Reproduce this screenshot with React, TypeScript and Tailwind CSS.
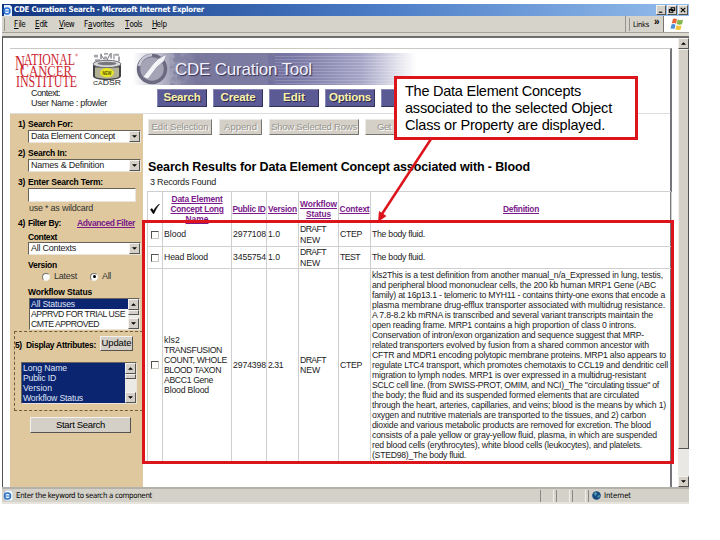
import React, { useLayoutEffect, useRef, useState } from 'react';

type TProps = { w: number; className?: string; children: string };

// Single-line label whose tracking is adjusted so that it spans exactly w pixels.
function T({ w, className = '', children }: TProps) {
  const ref = useRef<HTMLSpanElement>(null);
  const [ls, setLs] = useState(0);
  useLayoutEffect(() => {
    if (ref.current) {
      const natural = ref.current.getBoundingClientRect().width - ls * children.length;
      setLs((w - natural) / children.length);
    }
  }, [w, children]);
  return (
    <span ref={ref} className={`inline-block shrink-0 whitespace-pre ${className}`} style={{ letterSpacing: ls }}>
      {children}
    </span>
  );
}

const raised = 'border border-t-[#f4f2ee] border-l-[#f4f2ee] border-b-[#55534f] border-r-[#55534f] bg-[#d4d0c8]';
const sunken = 'border border-t-[#66625a] border-l-[#66625a] border-b-[#e9e5dc] border-r-[#e9e5dc] bg-white';

function Arrow({ up = false }: { up?: boolean }) {
  return (
    <svg className="block h-[3px] w-[5px]" viewBox="0 0 6 3">
      <path d={up ? 'M0 3L3 0L6 3Z' : 'M0 0H6L3 3Z'} fill="#000" />
    </svg>
  );
}

function ScrollButton({ up = false, className = '' }: { up?: boolean; className?: string }) {
  return (
    <div className={`flex h-[11px] w-[11px] shrink-0 items-center justify-center ${raised} ${className}`}>
      <Arrow up={up} />
    </div>
  );
}

function Select({ label, w }: { label: string; w: number }) {
  return (
    <div className={`ml-[18px] flex h-[13px] w-[113px] items-center justify-between pl-[2px] ${sunken}`}>
      <T w={w} className="text-[9px] text-[#222]">{label}</T>
      <ScrollButton />
    </div>
  );
}

function Label({ n, text, w, className }: { n?: string; text: string; w: number; className: string }) {
  return (
    <div className={`flex items-center pl-[8px] text-[8.5px] font-bold ${className}`}>
      <span className="w-[10px] shrink-0 tracking-[-0.3px]">{n}</span>
      <T w={w}>{text}</T>
    </div>
  );
}

function ListBox({ rows, className, selected }: { rows: [string, number][]; className: string; selected: number }) {
  return (
    <div className={`flex ${className} ${sunken}`}>
      <div className="flex-1">
        {rows.map(([t, w], i) => (
          <div key={t} className={`flex h-[10px] items-center pt-px pl-[1px] text-[8.7px] leading-[9px] ${i < selected ? 'bg-[#0c2570] text-[#dfe4f4]' : 'text-[#222]'}`}>
            <T w={w}>{t}</T>
          </div>
        ))}
      </div>
      <div className="flex w-[11px] shrink-0 flex-col justify-between bg-[#eceae5]">
        <div>
          <ScrollButton up />
          <div className={`h-[5px] w-[11px] ${raised}`} />
        </div>
        <ScrollButton />
      </div>
    </div>
  );
}

function NciLogo() {
  return (
    <svg className="ml-[2px] h-[36px] w-[68px] shrink-0" viewBox="0 0 68 36" fontFamily="'Liberation Serif', serif" fill="#cc2630">
      <text x="3" y="18" fontSize="20" textLength="10" lengthAdjust="spacingAndGlyphs">N</text>
      <text x="12" y="13" fontSize="16" textLength="51" lengthAdjust="spacingAndGlyphs">ATIONAL</text>
      <text x="8" y="25" fontSize="18" textLength="9" lengthAdjust="spacingAndGlyphs">C</text>
      <text x="17" y="23.500" fontSize="15" textLength="43" lengthAdjust="spacingAndGlyphs">ANCER</text>
      <text x="4" y="35" fontSize="16" textLength="61" lengthAdjust="spacingAndGlyphs">INSTITUTE</text>
      <circle cx="64.500" cy="3" r="0.900" fill="none" stroke="#c8202c" strokeWidth="0.500" />
    </svg>
  );
}

function CadsrLogo() {
  return (
    <svg className="ml-[10px] h-[34px] w-[34px] shrink-0" viewBox="0 0 34 37" preserveAspectRatio="none">
      <g fill="#a7a5ac">
        <path d="M4 3h4v3h-4zM10 2h2v6h-2zM14 1h4v2h-4zM14 5h3v3h-3zM20 1h2v6h-2zM25 2h4v2h-4zM28 5h2v5h-2zM5 8h5v2h-5z" />
      </g>
      <path d="M11 3l3 5M20 2l-3 7M24 2v6" stroke="#747078" strokeWidth="1" />
      <path d="M3 14v12c0 6 28 6 28 0V14z" fill="#3f3f44" />
      <path d="M5 17v9c0 4 24 4 24 0v-9z" fill="#b3b194" />
      <ellipse cx="17" cy="13" rx="14" ry="4" fill="#d9d9dc" stroke="#68686f" />
      <ellipse cx="17" cy="12.500" rx="9.500" ry="2" fill="#77777e" />
      <ellipse cx="17" cy="22.500" rx="7" ry="5" fill="#e7e526" />
      <text x="12.500" y="24.500" fontSize="5" fontWeight="bold" fontFamily="Liberation Sans, sans-serif" textLength="9" lengthAdjust="spacingAndGlyphs" fill="#575500">NEW</text>
      <text x="3" y="36" fontSize="7.500" fontFamily="Liberation Sans, sans-serif" textLength="28" lengthAdjust="spacingAndGlyphs" fill="#222"><tspan fontSize="6">CA</tspan>DSR</text>
    </svg>
  );
}

function Banner() {
  return (
    <svg className="ml-[9px] h-[34px] w-[300px] shrink-0" viewBox="133 52 300 34">
      <defs>
        <linearGradient id="fade" x1="0" x2="1">
          <stop offset="0" stopColor="#fff" />
          <stop offset="0.12" stopColor="#a9a8bd" />
          <stop offset="0.22" stopColor="#77759b" />
          <stop offset="0.55" stopColor="#8280ab" />
          <stop offset="0.78" stopColor="#aaa9c9" />
          <stop offset="0.97" stopColor="#fff" />
        </linearGradient>
        <linearGradient id="down" x1="0" x2="1">
          <stop offset="0" stopColor="#55538a" stopOpacity="0.3" />
          <stop offset="1" stopColor="#8885b5" stopOpacity="0" />
        </linearGradient>
        <filter id="speckle" x="0" y="0" width="100%" height="100%">
          <feTurbulence type="fractalNoise" baseFrequency="0.16" numOctaves="3" seed="4" />
          <feColorMatrix values="0 0 0 0 0.2  0 0 0 0 0.2  0 0 0 0 0.34  4 0 0 0 -1.5" />
        </filter>
      </defs>
      <rect x="133" y="53" width="292" height="32" fill="url(#fade)" />
      <rect x="268" y="53" width="130" height="32" fill="url(#down)" />
      <rect x="170" y="53" width="105" height="32" filter="url(#speckle)" opacity="0.75" />
      {[56, 59, 62, 65, 68, 71, 74, 77, 80, 83].map((y) => (
        <path key={y} d={`M275 ${y}.5H420`} stroke="#fff" strokeWidth="0.8" opacity="0.22" />
      ))}
      <circle cx="152" cy="69" r="13.500" fill="#a5a4b6" stroke="#6b6a80" strokeWidth="3.500" />
      <path d="M139 66a14 14 0 0 1 13-11" stroke="#c9c9d6" strokeWidth="2.500" fill="none" />
      <path d="M143 77l10-13 5-5 9-5-3 7-7 6-9 12z" fill="#f4f4f8" stroke="#8c8aa0" strokeWidth="0.600" />
      <text x="175" y="74.500" textLength="137" fontFamily="Liberation Sans, sans-serif" fontSize="17" fill="#f3f2fc" className="[text-shadow:1px_1px_1px_#2f2d55]">CDE Curation Tool</text>
    </svg>
  );
}

function NavButton({ label, w }: { label: string; w: number }) {
  return (
    <div className="flex h-[18px] w-[50px] shrink-0 items-center justify-center border border-t-[#8886b5] border-l-[#8886b5] border-r-[#33325c] border-b-[#33325c] bg-[#5c5a94] text-[11.5px] font-bold text-[#fbf3a8] [text-shadow:1px_1px_0_#292850]">
      <T w={w}>{label}</T>
    </div>
  );
}

function GreyButton({ label, w, className }: { label: string; w: number; className: string }) {
  return (
    <div className={`flex h-[16px] shrink-0 items-center border border-t-[#ebe9e4] border-l-[#ebe9e4] border-r-[#77756f] border-b-[#77756f] bg-[#d4d0c8] text-[9.5px] text-[#96938c] [text-shadow:1px_1px_0_#fff] ${className}`}>
      <T w={w}>{label}</T>
    </div>
  );
}

const definition: [string, number][] = [
  ['kls2This is a test definition from another manual_n/a_Expressed in lung, testis,', 291],
  ['and peripheral blood mononuclear cells, the 200 kb human MRP1 Gene (ABC', 284],
  ['family) at 16p13.1 - telomeric to MYH11 - contains thirty-one exons that encode a', 293],
  ['plasma membrane drug-efflux transporter associated with multidrug resistance.', 293],
  ['A 7.8-8.2 kb mRNA is transcribed and several variant transcripts maintain the', 281],
  ['open reading frame. MRP1 contains a high proportion of class 0 introns.', 264],
  ['Conservation of intron/exon organization and sequence suggest that MRP-', 272],
  ['related transporters evolved by fusion from a shared common ancestor with', 277],
  ['CFTR and MDR1 encoding polytopic membrane proteins. MRP1 also appears to', 294],
  ['regulate LTC4 transport, which promotes chemotaxis to CCL19 and dendritic cell', 296],
  ['migration to lymph nodes. MRP1 is over expressed in a multidrug-resistant', 274],
  ['SCLC cell line. (from SWISS-PROT, OMIM, and NCI)_The "circulating tissue" of', 287],
  ['the body; the fluid and its suspended formed elements that are circulated', 267],
  ['through the heart, arteries, capillaries, and veins; blood is the means by which 1)', 294],
  ['oxygen and nutritive materials are transported to the tissues, and 2) carbon', 274],
  ['dioxide and various metabolic products are removed for excretion. The blood', 279],
  ['consists of a pale yellow or gray-yellow fluid, plasma, in which are suspended', 285],
  ['red blood cells (erythrocytes), white blood cells (leukocytes), and platelets.', 270],
  ['(STED98)_The body fluid.', 94],
];

type Line = [string, number];
type Row = { cells: Line[][]; height: string };

const rows: Row[] = [
  { height: 'h-[24px]', cells: [[['Blood', 22]], [['2977108', 33]], [['1.0', 12]], [['DRAFT', 26], ['NEW', 20]], [['CTEP', 22]], [['The body fluid.', 53]]] },
  { height: 'h-[22px]', cells: [[['Head Blood', 44]], [['3455754', 33]], [['1.0', 12]], [['DRAFT', 26], ['NEW', 20]], [['TEST', 20]], [['The body fluid.', 53]]] },
  {
    height: 'h-[193px]',
    cells: [
      [['kls2', 16], ['TRANSFUSION', 58], ['COUNT, WHOLE', 63], ['BLOOD TAXON', 57], ['ABCC1 Gene', 49], ['Blood Blood', 45]],
      [['2974398', 33]], [['2.31', 15]], [['DRAFT', 26], ['NEW', 20]], [['CTEP', 22]], definition,
    ],
  },
];

const headers: Line[][] = [
  [['Data Element', 51], ['Concept Long', 53], ['Name', 23]],
  [['Public ID', 33]], [['Version', 29]], [['Workflow', 37], ['Status', 25]], [['Context', 30]], [['Definition', 36]],
];

const gridCols = 'grid grid-cols-[15px_69px_35px_32px_40px_32px_301px]';

function Results() {
  return (
    <div className="ml-[4px] w-[524px] border-t border-l border-[#cfcfd2] text-[8.7px] leading-[10.05px] text-[#222]">
      <div className={`${gridCols} h-[31px]`}>
        <div className="flex items-center justify-center border-r border-[#cfcfd2] pt-[2px]">
          <svg className="h-[10px] w-[10px]" viewBox="0 0 10 10"><path d="M.5 5.500L2 4.500 3.500 7C5 4 7 1.500 9.500 0 7 3 5.500 6 4 9.500H3z" fill="#000" stroke="#000" strokeWidth=".5" /></svg>
        </div>
        {headers.map((h, i) => (
          <div key={i} className="flex flex-col items-center justify-center border-r border-[#cfcfd2] pt-[2px] text-[8.4px] font-bold leading-[10px] text-[#7b1a8b]">
            {h.map(([t, w]) => <T key={t} w={w} className="underline">{t}</T>)}
          </div>
        ))}
      </div>
      {rows.map((r, i) => (
        <div key={i} className={`${gridCols} ${r.height} border-b border-[#cfcfd2]`}>
          <div className="flex items-center justify-center border-r border-[#cfcfd2]">
            <div className="h-[8px] w-[8px] border border-t-[#55534f] border-l-[#55534f] border-r-[#c9c6bf] border-b-[#c9c6bf] bg-white" />
          </div>
          {r.cells.map((c, j) => (
            <div key={j} className="flex flex-col items-start justify-center border-r border-[#cfcfd2] pl-px">
              {c.map(([t, w], k) => <T key={k} w={w}>{t}</T>)}
            </div>
          ))}
        </div>
      ))}
    </div>
  );
}

const menu: [string, string, number, string][] = [
  ['', 'F', 11, 'ile'], ['', 'E', 12, 'dit'], ['', 'V', 15, 'iew'], ['F', 'a', 30, 'vorites'], ['', 'T', 17, 'ools'], ['', 'H', 15, 'elp'],
];

export default function App() {
  return (
    <div className="relative h-[540px] w-[720px] overflow-hidden bg-white pt-[4px] pl-[2px] font-['Liberation_Sans',sans-serif] text-black">
      <div className="flex h-[500px] w-[687px] flex-col">
        {/* title bar */}
        <div className="flex h-[12px] shrink-0 items-center bg-linear-to-r from-[#123580] via-[#4c7cc6] via-55% to-[#94bdec] pr-px">
          <svg className="mr-[2px] ml-px h-[11px] w-[9px]" viewBox="0 0 9 11"><path d="M1 0h6l2 2v9H1z" fill="#e7eefc" /><circle cx="4" cy="6" r="3" fill="none" stroke="#2a73d8" strokeWidth="1.500" /><path d="M1 6h6" stroke="#2a73d8" /></svg>
          <T w={190} className="font-['DejaVu_Sans_Condensed','DejaVu_Sans'] text-[7.8px] font-bold text-white">CDE Curation: Search - Microsoft Internet Explorer</T>
          <div className="ml-auto flex gap-[1px]">
            {['M2 7h4', 'M3.500 2h4v3h-4zM1.500 4h4v3h-4z', 'M2 2l5 5M7 2l-5 5'].map((d, i) => (
              <div key={i} className={`h-[10px] w-[10px] ${raised}`}>
                <svg viewBox="0 0 9 9" className="h-full w-full"><path d={d} fill="none" stroke="#000" strokeWidth="1.200" /></svg>
              </div>
            ))}
          </div>
        </div>
        {/* menu bar */}
        <div className="flex h-[17px] shrink-0 items-center border-b border-[#a5a29b] bg-[#d6d3ca]">
          <div className="h-[13px] w-[3px] border-r border-[#96938c]" />
          <div className="ml-[9px] flex pt-[2px] text-[8px] font-['DejaVu_Sans_Condensed','DejaVu_Sans']">
            {menu.map(([a, u, w, rest], i) => (
              <div key={i} className={`flex ${['w-[21px]', 'w-[24px]', 'w-[25px]', 'w-[41px]', 'w-[27px]', 'w-[20px]'][i]}`}>
                {a && <T w={4}>{a}</T>}
                <T w={4.5} className="underline">{u}</T>
                <T w={a ? w - 8.5 : w - 4.5}>{rest}</T>
              </div>
            ))}
          </div>
          <div className="ml-auto flex h-full items-center border-l border-[#96938c] pl-[3px]">
            <div className="mr-[3px] h-[13px] w-px bg-[#96938c]" />
            <T w={16} className="pt-[2px] font-['DejaVu_Sans_Condensed','DejaVu_Sans'] text-[7.5px]">Links</T>
            <span className="ml-[5px] w-[9px] pb-[5px] text-[10px] leading-[10px] font-bold">»</span>
            <div className="flex h-full w-[26px] items-center justify-center border-l border-[#77756f] bg-white">
              <svg className="h-[13px] w-[14px]" viewBox="0 0 14 13"><path d="M3 1q2-1 4 .3L6 5.700Q4 4.500 1.700 5.500z" fill="#ec6434" /><path d="M7.700 1.600q2 1 5.300.2L12 6.300q-3 .8-5.300-.2z" fill="#7fb848" /><path d="M1.500 6.500q2-1 4 .3L4.500 11Q2.500 10 .5 10.700z" fill="#4a8fd8" /><path d="M6.500 7.200q2 1 5 .2l-1 4.300q-3 .7-5-.4z" fill="#f2c238" /></svg>
            </div>
          </div>
        </div>
        <div className="h-[3px] shrink-0 bg-[#dcd9d1]" />
        {/* viewport */}
        <div className="flex h-[451px] shrink-0 border-t-2 border-l border-[#6f6e6c] border-l-[#55534f]">
          <div className="ml-[7px] h-[449px] w-[662px] pt-[10px]">
            <div className="h-[439px] border-t border-r-2 border-t-[#cac9c6] border-r-[#77767a]">
              <div className="h-[65px] border-b border-[#dcdcdc]">
                <div className="flex h-[38px] items-start pt-[3px]">
                  <NciLogo />
                  <CadsrLogo />
                  <Banner />
                </div>
                <div className="flex h-[26px]">
                  <div className="flex w-[147px] shrink-0 flex-col items-start pt-px pl-[21px] text-[9px] leading-[10px] text-[#222]">
                    <T w={29}>Context:</T>
                    <T w={76}>User Name : pfowler</T>
                  </div>
                  <div className="flex gap-[6px] pt-[2px]">
                    <NavButton label="Search" w={37} />
                    <NavButton label="Create" w={35} />
                    <NavButton label="Edit" w={22} />
                    <NavButton label="Options" w={42} />
                    <NavButton label="Help" w={25} />
                  </div>
                </div>
              </div>
              <div className="flex h-[373px]">
                {/* sidebar */}
                <div className="w-[133px] shrink-0 bg-[#dfc89e]">
                  <Label n="1)" text="Search For:" w={45} className="h-[16px] pt-[5px]" />
                  <Select label="Data Element Concept" w={84} />
                  <Label n="2)" text="Search In:" w={39} className="h-[16px] pt-[5px]" />
                  <Select label="Names & Definition" w={73} />
                  <Label n="3)" text="Enter Search Term:" w={75} className="h-[16px] pt-[5px]" />
                  <div className={`ml-[18px] h-[14px] w-[108px] ${sunken}`} />
                  <div className="flex h-[14px] items-center pl-[19px] text-[9px] text-[#333]"><T w={64}>use * as wildcard</T></div>
                  <div className="flex h-[13px] items-center pt-[2px] text-[8.5px] font-bold">
                    <Label n="4)" text="Filter By:" w={33} className="w-[67px]" />
                    <T w={58} className="text-[#7b1a8b] underline">Advanced Filter</T>
                  </div>
                  <Label text="Context" w={29} className="h-[13px] pt-[4px]" />
                  <Select label="All Contexts" w={45} />
                  <Label text="Version" w={29} className="h-[16px] pt-[4px]" />
                  <div className="flex h-[11px] items-center pl-[32px] text-[9px] text-[#333]">
                    <div className="mr-[4px] h-[8px] w-[8px] rounded-full border border-t-[#777] border-l-[#777] border-[#f2eee4] bg-white" />
                    <T w={23}>Latest</T>
                    <div className="mr-[4px] ml-[13px] flex h-[8px] w-[8px] items-center justify-center rounded-full border border-t-[#777] border-l-[#777] border-[#f2eee4] bg-white"><div className="h-[3px] w-[3px] rounded-full bg-black" /></div>
                    <T w={9}>All</T>
                  </div>
                  <Label text="Workflow Status" w={64} className="h-[16px] pt-[4px]" />
                  <ListBox rows={[['All Statuses', 44], ['APPRVD FOR TRIAL USE', 94], ['CMTE APPROVED', 68]]} selected={1} className="ml-[19px] h-[32px] w-[111px]" />
                  <div className="mt-px ml-[4px] h-[80px] w-[129px] border border-dashed border-[#6e5c3c] pt-[4px]">
                    <div className="flex h-[15px] items-center text-[8.5px] font-bold">
                      <span className="w-[11px] shrink-0 pt-[4px] tracking-[-0.4px]">5)</span>
                      <T w={70} className="pt-[4px]">Display Attributes:</T>
                      <div className={`ml-[4px] flex h-[15px] w-[33px] items-center justify-center text-[9.5px] font-normal ${raised}`}><T w={30}>Update</T></div>
                    </div>
                    <ListBox rows={[['Long Name', 44], ['Public ID', 33], ['Version', 29], ['Workflow Status', 60]]} selected={4} className="mt-[11px] ml-[6px] h-[42px] w-[116px]" />
                  </div>
                  <div className={`mt-[6px] ml-[20px] flex h-[16px] w-[101px] items-center justify-center text-[9.5px] ${raised}`}><T w={49}>Start Search</T></div>
                </div>
                {/* results */}
                <div className="w-[528px] shrink-0">
                  <div className="flex h-[42px] gap-[7px] pt-[5px] pl-[5px]">
                    <GreyButton label="Edit Selection" w={57} className="w-[64px] justify-center" />
                    <GreyButton label="Append" w={33} className="w-[43px] justify-center" />
                    <GreyButton label="Show Selected Rows" w={86} className="w-[90px] justify-center" />
                    <GreyButton label="Get" w={14} className="-ml-px w-[88px] pl-[11px]" />
                  </div>
                  <div className="flex h-[22px] items-center pl-[5px] text-[12.5px] font-bold"><T w={382}>Search Results for Data Element Concept associated with - Blood</T></div>
                  <div className="flex h-[13px] items-start pl-[7px] text-[9px] leading-[9px] text-[#222]"><T w={66}>3 Records Found</T></div>
                  <Results />
                </div>
              </div>
            </div>
          </div>
          <div className="ml-auto flex h-full w-[11px] flex-col bg-[#e9e8e4]">
            <ScrollButton up />
            <div className={`h-[400px] w-[11px] ${raised}`} />
            <ScrollButton className="mt-auto" />
          </div>
        </div>
        {/* status bar */}
        <div className="flex h-[17px] shrink-0 items-center border-t-2 border-b-2 border-t-[#b3b1aa] border-b-[#e7e4dd] bg-[#d4d1c8] font-['DejaVu_Sans_Condensed','DejaVu_Sans'] text-[7.8px]">
          <svg className="mr-[3px] ml-px h-[11px] w-[10px]" viewBox="0 0 10 11"><path d="M2 0h6l2 2v9H2z" fill="#f5f8ff" stroke="#8094b5" strokeWidth=".5" /><circle cx="4.500" cy="6" r="3" fill="none" stroke="#2a73c8" strokeWidth="1.500" /><path d="M2 6h5" stroke="#2a73c8" /></svg>
          <T w={136}>Enter the keyword to search a component</T>
          <div className="ml-auto flex h-[12px] w-[149px]">
            {[0, 1, 2].map((i) => <div key={i} className="mr-[2px] w-[14px] border-r border-l border-l-[#8b8982] border-r-[#f2f0eb]" />)}
            <div className="flex flex-1 items-center border-l border-[#8b8982] pl-[3px]">
              <svg className="mr-[3px] h-[9px] w-[9px]" viewBox="0 0 9 9"><circle cx="4.500" cy="4.500" r="4.300" fill="#164a80" /><path d="M2 2l2-1 1 2-2 2zM5 5l3-1-1 3z" fill="#55a7b5" /></svg>
              <T w={27}>Internet</T>
            </div>
          </div>
        </div>
      </div>
      {/* annotation overlay */}
      <div className="absolute top-[220px] left-[142px] h-[244px] w-[532px] border-3 border-[#dc141c]" />
      <svg className="absolute top-[136px] left-[370px] h-[90px] w-[70px]" viewBox="370 136 70 90">
        <path d="M431 139L382 214" stroke="#dc141c" strokeWidth="2.500" />
        <path d="M378 222L379 211L386.500 216Z" fill="#dc141c" />
      </svg>
      <div className="absolute top-[76px] left-[394px] flex h-[64px] w-[244px] flex-col items-start border-3 border-[#dc141c] bg-white pt-[4px] pl-[8px] text-[14.5px] leading-[17px]">
        <T w={176}>The Data Element Concepts</T>
        <T w={207}>associated to the selected Object</T>
        <T w={200}>Class or Property are displayed.</T>
      </div>
    </div>
  );
}
